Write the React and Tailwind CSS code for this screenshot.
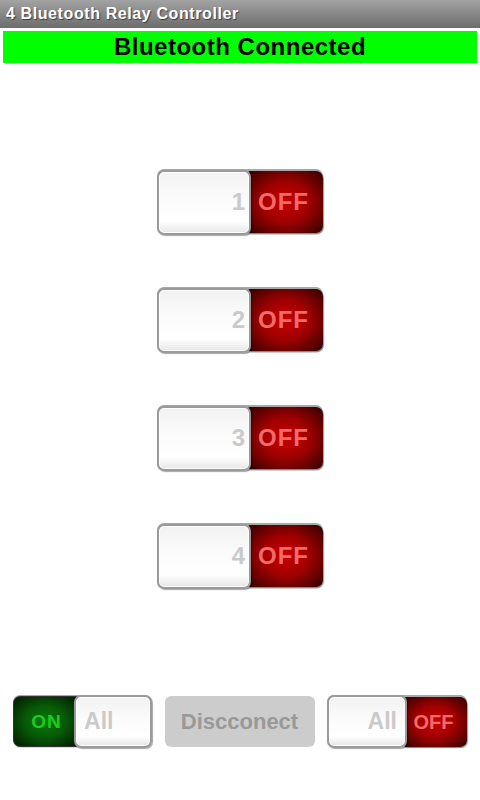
import React from "react";

const font = { fontFamily: '"Liberation Sans", Arial, sans-serif' };

function Knob({ w, h, children, align = "end", pr = 4 }) {
  return (
    <div
      className={`relative z-10 flex items-center ${align === "end" ? "justify-end" : "justify-start pl-[8px]"} rounded-[7px] border-[2px] border-[#9a9a9a] bg-[linear-gradient(to_bottom,#f2f2f2_0%,#fbfbfb_45%,#ffffff_80%,#e6e6e6_100%)] shadow-[inset_0_0_0_1px_#ffffff,1px_1px_1px_rgba(0,0,0,0.35)]`}
      style={{ width: w, height: h, paddingRight: align === "end" ? pr : undefined }}
    >
      {children}
    </div>
  );
}

function RedPart({ w, h, size, track }) {
  return (
    <div
      className="flex items-center justify-center rounded-r-[7px] rounded-l-[2px] bg-[radial-gradient(ellipse_at_center,#c80000_0%,#a00000_45%,#5a0000_80%,#2a0000_100%)] shadow-[1px_1px_1px_rgba(0,0,0,0.4)] -ml-[3px]"
      style={{ width: w, height: h }}
    >
      <span className="font-bold text-[#f26a6a] leading-none pr-[4px]" style={{ fontSize: size, letterSpacing: track }}>
        OFF
      </span>
    </div>
  );
}

function RelaySwitch({ n }) {
  return (
    <div className="flex items-center rounded-[7px] bg-[linear-gradient(to_bottom,#a8a8a8,#d8d8d8)] w-[166px] h-[66px]">
      <Knob w={94} h={65} pr={4}>
        <span className="text-[24px] font-bold text-[#cacaca] leading-none">{n}</span>
      </Knob>
      <RedPart w={75} h={62} size={24} track="1px" />
    </div>
  );
}

export default function App() {
  return (
    <div className="w-[480px] h-[800px] bg-white flex flex-col" style={font}>
      <div className="h-[28px] bg-[linear-gradient(to_bottom,#a3a3a3,#6c6c6c)] flex items-center pl-[6px]">
        <span className="text-white font-bold text-[16px] tracking-[0.6px] leading-none [text-shadow:1px_1px_1px_rgba(0,0,0,0.5)]">
          4 Bluetooth Relay Controller
        </span>
      </div>
      <div className="mx-[3px] mt-[3px] h-[32px] bg-[#00ff00] flex items-center justify-center">
        <span className="text-black font-bold text-[24px] tracking-[0.5px] leading-none">Bluetooth Connected</span>
      </div>

      <div className="flex flex-col items-center gap-[52px] mt-[106px]">
        <RelaySwitch n="1" />
        <RelaySwitch n="2" />
        <RelaySwitch n="3" />
        <RelaySwitch n="4" />
      </div>

      <div className="flex items-center justify-between px-[13px] mt-[106px]">
        <div className="flex items-center rounded-[7px] bg-[linear-gradient(to_bottom,#a8a8a8,#d8d8d8)] w-[139px] h-[53px]">
          <div className="flex items-center justify-center w-[66px] h-[51px] rounded-l-[7px] rounded-r-[2px] border-[1px] border-[#333] bg-[radial-gradient(ellipse_at_center,#0a7a0a_0%,#075a07_45%,#033003_80%,#011801_100%)] -mr-[4px]">
            <span className="font-bold text-[19px] tracking-[1px] text-[#1ccc1c] pl-[2px] leading-none">ON</span>
          </div>
          <Knob w={79} h={53} align="start">
            <span className="text-[23px] font-bold text-[#cacaca] leading-none">All</span>
          </Knob>
        </div>

        <div className="w-[150px] h-[51px] rounded-[6px] bg-[#cccccc] flex items-center justify-center">
          <span className="font-bold text-[22px] text-[#999999] leading-none">Discconect</span>
        </div>

        <div className="flex items-center rounded-[7px] bg-[linear-gradient(to_bottom,#a8a8a8,#d8d8d8)] w-[140px] h-[53px]">
          <Knob w={80} h={53} pr={8}>
            <span className="text-[23px] font-bold text-[#cacaca] leading-none">All</span>
          </Knob>
          <RedPart w={63} h={50} size={20} track="0px" />
        </div>
      </div>
    </div>
  );
}
